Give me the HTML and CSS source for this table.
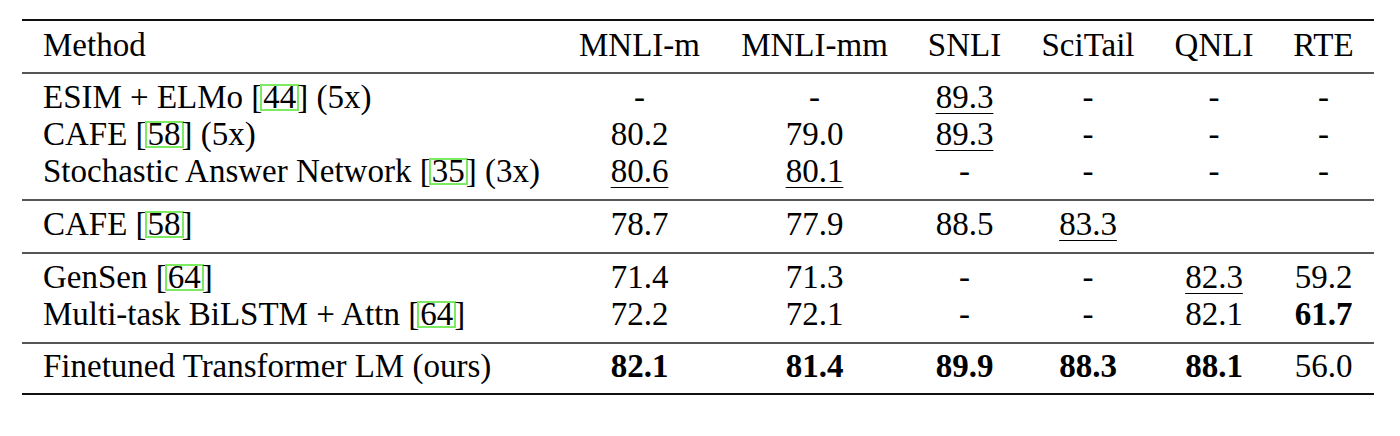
FILE: index.html
```html
<!DOCTYPE html>
<html lang="en">
<head>
    <meta charset="UTF-8">
    <title>Results on natural language inference tasks</title>
    <link rel="stylesheet" href="styles.css">
</head>
<body>
    <table class="resultados">
        <colgroup>
            <col class="c-method">
            <col class="c-mnlim">
            <col class="c-mnlimm">
            <col class="c-snli">
            <col class="c-scitail">
            <col class="c-qnli">
            <col class="c-rte">
        </colgroup>
        <thead>
            <tr>
                <th>Method</th>
                <th>MNLI-m</th>
                <th>MNLI-mm</th>
                <th>SNLI</th>
                <th>SciTail</th>
                <th>QNLI</th>
                <th>RTE</th>
            </tr>
        </thead>
        <tbody>
            <tr>
                <td>ESIM + ELMo [<span class="cite">44</span>] (5x)</td>
                <td>-</td>
                <td>-</td>
                <td><span class="sub">89.3</span></td>
                <td>-</td>
                <td>-</td>
                <td>-</td>
            </tr>
            <tr>
                <td>CAFE [<span class="cite">58</span>] (5x)</td>
                <td>80.2</td>
                <td>79.0</td>
                <td><span class="sub">89.3</span></td>
                <td>-</td>
                <td>-</td>
                <td>-</td>
            </tr>
            <tr>
                <td>Stochastic Answer Network [<span class="cite">35</span>] (3x)</td>
                <td><span class="sub">80.6</span></td>
                <td><span class="sub">80.1</span></td>
                <td>-</td>
                <td>-</td>
                <td>-</td>
                <td>-</td>
            </tr>
        </tbody>
        <tbody>
            <tr>
                <td>CAFE [<span class="cite">58</span>]</td>
                <td>78.7</td>
                <td>77.9</td>
                <td>88.5</td>
                <td><span class="sub">83.3</span></td>
                <td></td>
                <td></td>
            </tr>
        </tbody>
        <tbody>
            <tr>
                <td>GenSen [<span class="cite">64</span>]</td>
                <td>71.4</td>
                <td>71.3</td>
                <td>-</td>
                <td>-</td>
                <td><span class="sub">82.3</span></td>
                <td>59.2</td>
            </tr>
            <tr>
                <td>Multi-task BiLSTM + Attn [<span class="cite">64</span>]</td>
                <td>72.2</td>
                <td>72.1</td>
                <td>-</td>
                <td>-</td>
                <td>82.1</td>
                <td><b>61.7</b></td>
            </tr>
        </tbody>
        <tbody class="ultimo">
            <tr>
                <td>Finetuned Transformer LM (ours)</td>
                <td><b>82.1</b></td>
                <td><b>81.4</b></td>
                <td><b>89.9</b></td>
                <td><b>88.3</b></td>
                <td><b>88.1</b></td>
                <td>56.0</td>
            </tr>
        </tbody>
    </table>
</body>
</html>
```

FILE: styles.css
```css
body {
    margin: 0;
    background-color: #fff;
    color: #000;
    font-family: "Liberation Serif", "Times New Roman", serif;
}
.resultados {
    margin: 19px 0 0 22px;
    width: 1352px;
    table-layout: fixed;
    border-collapse: separate;
    border-spacing: 0;
    font-size: 33px;
    line-height: 37px;
}
.c-method { width: 536px; }
.c-mnlim { width: 163px; }
.c-mnlimm { width: 187px; }
.c-snli { width: 113px; }
.c-scitail { width: 134px; }
.c-qnli { width: 118px; }
.c-rte { width: 101px; }

th, td {
    padding: 0;
    text-align: center;
    font-weight: normal;
    white-space: nowrap;
}
th:first-child, td:first-child {
    text-align: left;
    padding-left: 21px;
}
thead th {
    border-top: 2px solid #111;
    padding-top: 6px;
    padding-bottom: 8px;
}
tbody tr:first-child td {
    border-top: 2px solid #555;
    padding-top: 5px;
}
tbody tr:last-child td {
    padding-bottom: 9px;
}
.ultimo tr:last-child td {
    border-bottom: 2px solid #111;
    padding-top: 4px;
    padding-bottom: 8px;
}
b {
    font-weight: bold;
}
.sub {
    text-decoration: underline;
    text-decoration-thickness: 1px;
    text-underline-offset: 5px;
}
.cite {
    display: inline-block;
    line-height: 23px;
    padding: 0 1px;
    margin: 0 -2px;
    border: 2px solid #7ceb62;
}
```
